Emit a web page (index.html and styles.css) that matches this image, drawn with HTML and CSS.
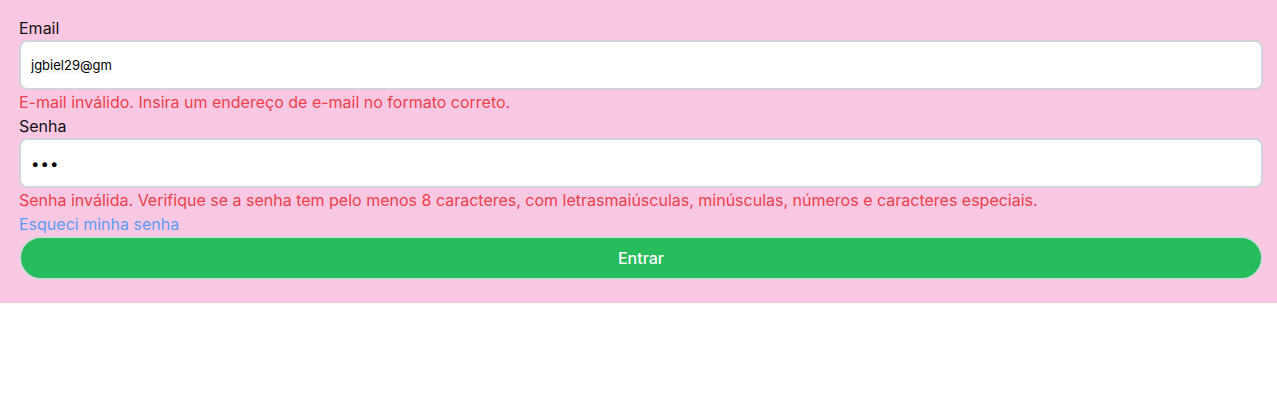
FILE: index.html
```html
<!DOCTYPE html>
<html lang="pt-BR">
<head>
<meta charset="utf-8">
<title>Login</title>
<link rel="stylesheet" href="styles.css">
</head>
<body>
<form class="login">
  <label class="label" for="email">Email</label>
  <input class="field field-email" id="email" type="text" value="jgbiel29@gm">
  <p class="error">E-mail inválido. Insira um endereço de e-mail no formato correto.</p>
  <label class="label" for="senha">Senha</label>
  <input class="field field-pass" id="senha" type="password" value="abc">
  <p class="error">Senha inválida. Verifique se a senha tem pelo menos 8 caracteres, com letrasmaiúsculas, minúsculas, números e caracteres especiais.</p>
  <a class="forgot" href="#">Esqueci minha senha</a>
  <button class="submit" type="button">Entrar</button>
</form>
</body>
</html>
```
FILE: styles.css
```css
* { box-sizing: border-box; }
html, body { margin: 0; padding: 0; background: #ffffff; }
body { font-family: Inter, "Liberation Sans", Arial, sans-serif; }
.login {
  background: #fbc8e4;
  padding: 16px 14px 23px 19px;
  display: flex;
  flex-direction: column;
  font-size: 16px;
  line-height: 24px;
}
.label { color: #111111; display: block; }
.field {
  height: 50px;
  width: 100%;
  border: 2px solid #d1d5db;
  border-radius: 8px;
  background: #ffffff;
  padding: 0 10px;
  font-family: Inter, "Liberation Sans", Arial, sans-serif;
  font-size: 13px;
  color: #000000;
  outline: none;
}
.field-email { text-decoration: underline dotted #e0484e; text-underline-offset: 3px; }
.field-pass { font-size: 15px; letter-spacing: 1px; }
.error { margin: 0; color: #ef3f4a; }
.forgot { color: #5b9cf5; text-decoration: none; }
.submit {
  height: 44px;
  width: 100%;
  border: 2px solid #d4d7dc;
  border-radius: 999px;
  background: #26bc5c;
  color: #ffffff;
  font-family: Inter, "Liberation Sans", Arial, sans-serif;
  font-size: 16px;
  font-weight: 500;
}
```
